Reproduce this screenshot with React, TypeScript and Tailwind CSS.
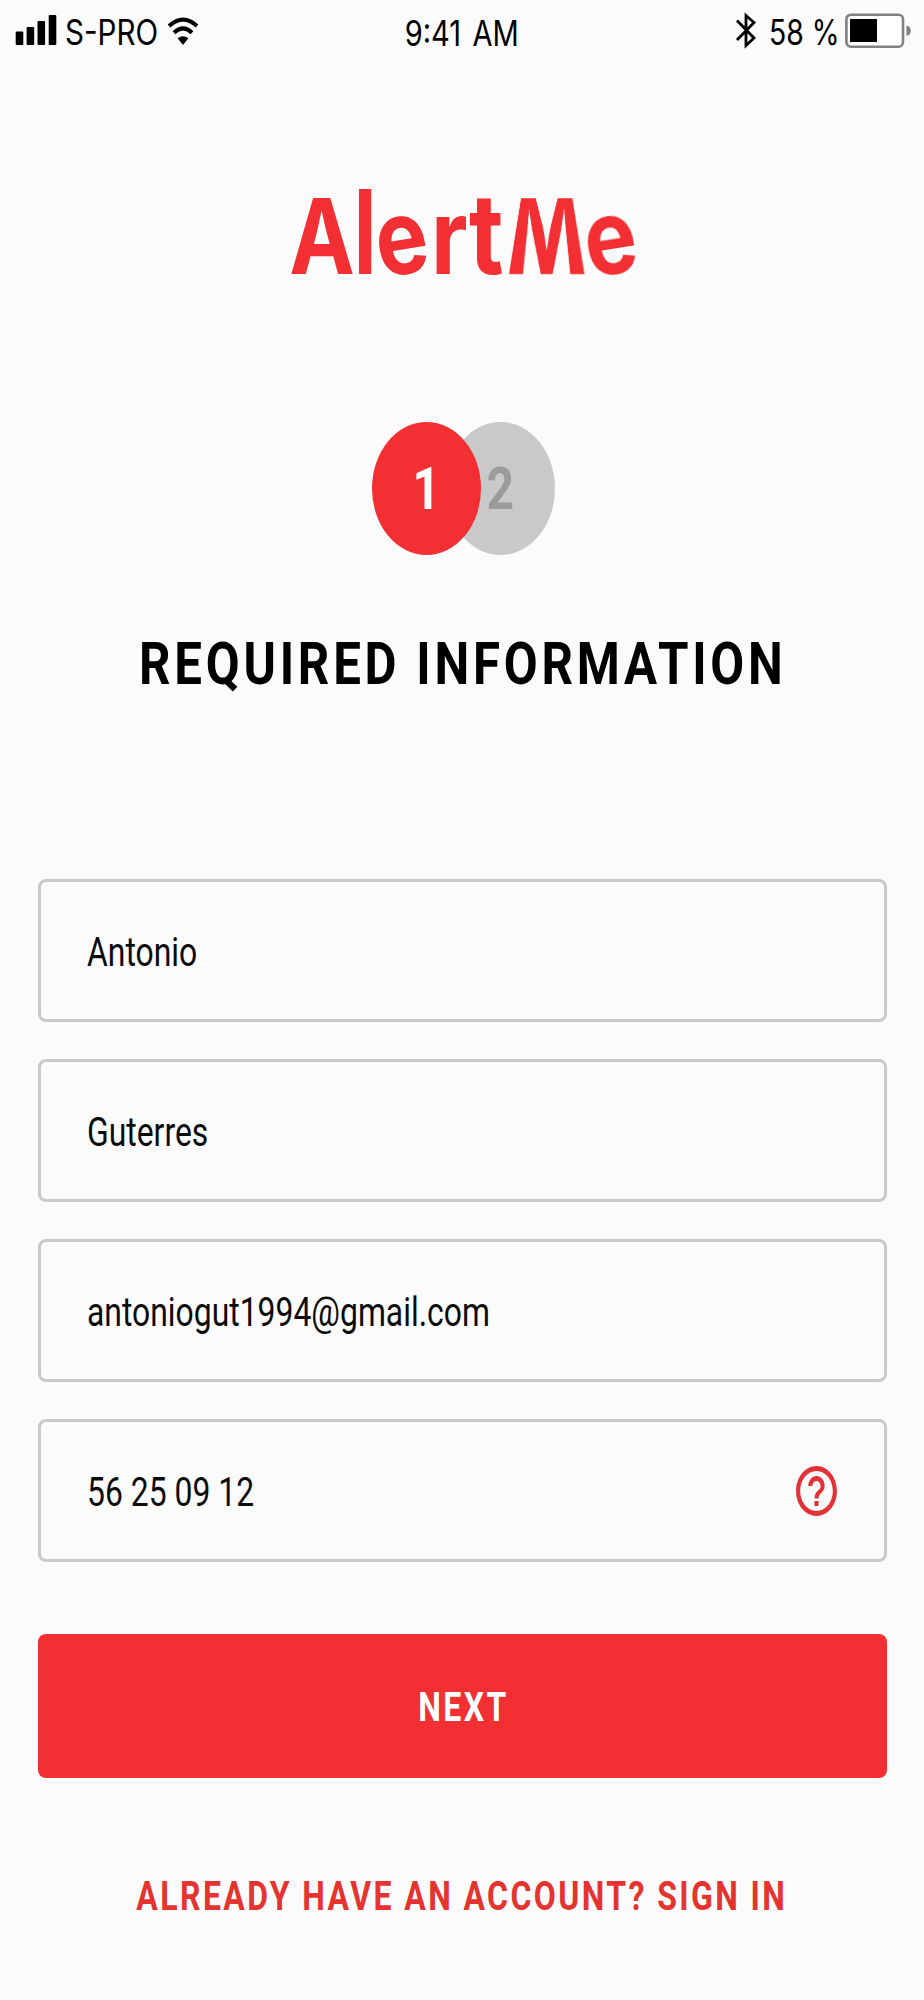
import React from "react";

const fields = ["Antonio", "Guterres", "antoniogut1994@gmail.com", "56 25 09 12"];

function StatusBar() {
  return (
    <header className="flex h-[64px] w-full shrink-0 items-start font-['Inter',sans-serif] text-[35px] leading-[64px] text-black">
      <div className="flex w-[400px] items-start">
        <svg className="ml-[15px] mt-[14px] h-[32px] w-[43px] shrink-0" viewBox="0 0 43 32">
          <rect x="0.7" y="17.5" width="7.6" height="13.5" rx="1" />
          <rect x="11.6" y="13" width="7.6" height="18" rx="1" />
          <rect x="22.5" y="7" width="7.6" height="24" rx="1" />
          <rect x="33.7" y="1" width="7.6" height="30" rx="1" />
        </svg>
        <div className="ml-[7px] w-[102px] shrink-0">
          <span className="inline-block origin-left scale-x-[0.845] whitespace-nowrap">S-PRO</span>
        </div>
        <svg className="mt-[17px] h-[29px] w-[32px] shrink-0" viewBox="0 0 32 29">
          <path d="M2 9 Q16 -3.6 30 9" fill="none" stroke="#000" strokeWidth="4" />
          <path d="M7 15.8 Q16 7 25 15.8" fill="none" stroke="#000" strokeWidth="4" />
          <path d="M10.6 21.2 Q16 17.2 21.4 21.2 L16 28 Z" />
        </svg>
      </div>
      <div className="flex w-[124px] justify-center pt-[1px]">
        <span className="inline-block scale-x-[0.83] whitespace-nowrap [word-spacing:4px]">9:41 AM</span>
      </div>
      <div className="flex flex-1 items-start">
        <svg className="ml-[211px] mt-[12px] h-[37px] w-[21px] shrink-0" viewBox="0 0 21 37">
          <path d="M2 8.5 L19 26 L11 33.5 V3.5 L19 10.5 L2 28" fill="none" stroke="#000" strokeWidth="2.8" />
        </svg>
        <div className="ml-[13px] w-[76px] shrink-0">
          <span className="inline-block origin-left scale-x-[0.81] whitespace-nowrap">58 %</span>
        </div>
        <svg className="mt-[13px] h-[36px] w-[67px] shrink-0" viewBox="0 0 67 36">
          <rect x="1.4" y="1.7" width="56.6" height="32" rx="4.5" fill="#fff" stroke="#808080" strokeWidth="2.6" />
          <rect x="5" y="6" width="27" height="23" />
          <path d="M61.5 12.5 Q65.8 13.5 65.8 17.7 Q65.8 22 61.5 23 Z" fill="#808080" />
        </svg>
      </div>
    </header>
  );
}

function Logo() {
  return (
    <h1 className="flex h-[160px] items-start font-['Inter',sans-serif] text-[104.5px] font-bold leading-[100px] text-[#f23033]">
      <span className="flex w-[62px] justify-center"><span className="scale-x-[0.84]">A</span></span>
      <span className="flex w-[25px] justify-center"><span className="origin-[50%_88%] scale-x-[0.8] scale-y-[1.12]">l</span></span>
      <span className="flex w-[49px] justify-center"><span className="origin-[50%_60%] rotate-[-9deg] scale-x-[0.84]">e</span></span>
      <span className="flex w-[45px] justify-center"><span className="scale-x-[0.86]">r</span></span>
      <span className="flex w-[29px] justify-center"><span className="origin-[50%_88%] scale-x-[0.9] scale-y-[1.07]">t</span></span>
      <span className="flex w-[92px] justify-center">
        <span className="[transform:translateY(-7px)_scale(0.73,1.11)_perspective(100px)_rotateX(30deg)]">M</span>
      </span>
      <span className="flex w-[37px] justify-center"><span className="origin-[50%_60%] rotate-[-9deg] scale-x-[0.84]">e</span></span>
    </h1>
  );
}

function Steps() {
  return (
    <div className="flex h-[133px] justify-center pl-[3px] text-[60px] font-bold leading-[134px]">
      <div className="z-10 flex h-[133px] w-[109px] justify-center rounded-[50%] bg-[#f23033] text-white">
        <span className="scale-x-[0.8]">1</span>
      </div>
      <div className="-ml-[35px] flex h-[133px] w-[109px] justify-center rounded-[50%] bg-[#c9c9c9] text-[#9b9b9b]">
        <span className="scale-x-[0.8]">2</span>
      </div>
    </div>
  );
}

export default function App() {
  return (
    <main className="flex h-[2000px] w-[924px] flex-col overflow-hidden bg-[#fbfbfb] font-['Roboto',sans-serif]">
      <StatusBar />
      <div className="flex justify-center pr-[3px] pt-[122px]">
        <Logo />
      </div>
      <div className="pt-[76px]">
        <Steps />
      </div>
      <div className="mt-[67px] flex h-[84px] justify-center pl-[2px]">
        <h2 className="scale-x-[0.82] whitespace-nowrap text-[60px] font-bold leading-[84px] tracking-[4.6px] text-black">
          REQUIRED INFORMATION
        </h2>
      </div>
      <div className="mt-[173px] flex flex-col gap-[37px] pl-[38px] pr-[37px]">
        {fields.map((value, i) => (
          <div
            key={value}
            className="flex h-[143px] items-center justify-between rounded-[8px] border-[3px] border-[#c9c9c9] pl-[46px] pr-[43px] text-[40px] text-[#0b0b0b]"
          >
            <span className="origin-left scale-x-[0.797] whitespace-nowrap pt-[4px]">{value}</span>
            {i === 3 && (
              <svg className="h-[60px] w-[49px]" viewBox="0 0 24 24" preserveAspectRatio="none" fill="#e23237">
                <path d="M11 18h2v-2h-2v2zm1-16C6.48 2 2 6.48 2 12s4.480 10 10 10 10-4.480 10-10S17.520 2 12 2zm0 18c-4.410 0-8-3.590-8-8s3.590-8 8-8 8 3.590 8 8-3.590 8-8 8zm0-14c-2.210 0-4 1.790-4 4h2c0-1.100.900-2 2-2s2 .900 2 2c0 2-3 1.750-3 5h2c0-2.250 3-2.500 3-5 0-2.210-1.790-4-4-4z" />
              </svg>
            )}
          </div>
        ))}
        <button className="mt-[35px] flex h-[144px] items-center justify-center rounded-[8px] bg-[#f23033] pl-[2px] pt-[4px] text-[40px] font-bold text-white">
          <span className="scale-x-[0.8] whitespace-nowrap tracking-[3px]">NEXT</span>
        </button>
      </div>
      <div className="mt-[89px] flex justify-center">
        <a className="scale-x-[0.8] whitespace-nowrap text-[40px] font-bold leading-[60px] tracking-[3px] text-[#e5332f]">
          ALREADY HAVE AN ACCOUNT? SIGN IN
        </a>
      </div>
    </main>
  );
}
